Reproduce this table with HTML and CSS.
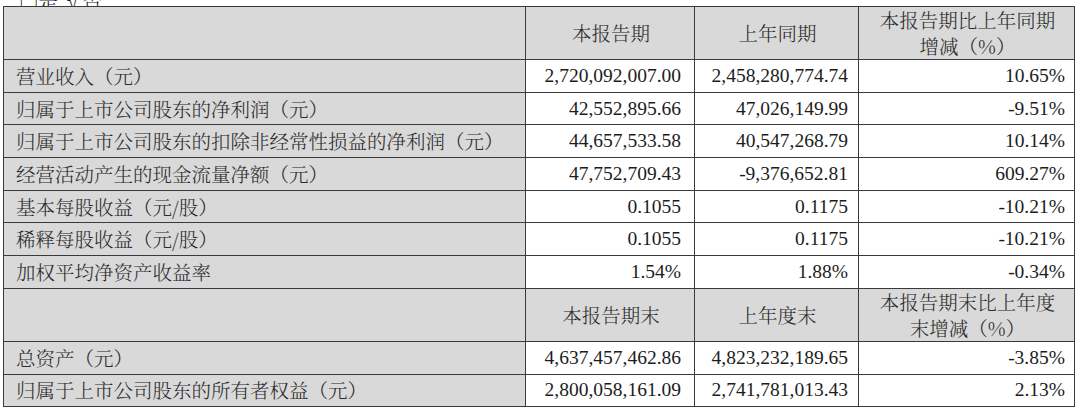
FILE: index.html
```html
<!DOCTYPE html>
<html lang="zh">
<head>
<meta charset="utf-8">
<link rel="stylesheet" href="styles.css">
</head>
<body>
<div class="cut"><span class="cut-text">□是 √否</span></div>
<table class="fin">
  <colgroup>
    <col class="c1"><col class="c2"><col class="c3"><col class="c4">
  </colgroup>
  <tr class="hd">
    <td class="lbl"></td>
    <td>本报告期</td>
    <td>上年同期</td>
    <td>本报告期比上年同期<br>增减（%）</td>
  </tr>
  <tr class="row"><td class="lbl">营业收入（元）</td><td class="num n2">2,720,092,007.00</td><td class="num">2,458,280,774.74</td><td class="num n4">10.65%</td></tr>
  <tr class="row"><td class="lbl">归属于上市公司股东的净利润（元）</td><td class="num n2">42,552,895.66</td><td class="num">47,026,149.99</td><td class="num n4">-9.51%</td></tr>
  <tr class="row"><td class="lbl">归属于上市公司股东的扣除非经常性损益的净利润（元）</td><td class="num n2">44,657,533.58</td><td class="num">40,547,268.79</td><td class="num n4">10.14%</td></tr>
  <tr class="row"><td class="lbl">经营活动产生的现金流量净额（元）</td><td class="num n2">47,752,709.43</td><td class="num">-9,376,652.81</td><td class="num n4">609.27%</td></tr>
  <tr class="row"><td class="lbl">基本每股收益（元/股）</td><td class="num n2">0.1055</td><td class="num">0.1175</td><td class="num n4">-10.21%</td></tr>
  <tr class="row"><td class="lbl">稀释每股收益（元/股）</td><td class="num n2">0.1055</td><td class="num">0.1175</td><td class="num n4">-10.21%</td></tr>
  <tr class="row"><td class="lbl">加权平均净资产收益率</td><td class="num n2">1.54%</td><td class="num">1.88%</td><td class="num n4">-0.34%</td></tr>
  <tr class="hd">
    <td class="lbl"></td>
    <td>本报告期末</td>
    <td>上年度末</td>
    <td>本报告期末比上年度<br>末增减（%）</td>
  </tr>
  <tr class="row"><td class="lbl">总资产（元）</td><td class="num n2">4,637,457,462.86</td><td class="num">4,823,232,189.65</td><td class="num n4">-3.85%</td></tr>
  <tr class="row"><td class="lbl">归属于上市公司股东的所有者权益（元）</td><td class="num n2">2,800,058,161.09</td><td class="num">2,741,781,013.43</td><td class="num n4">2.13%</td></tr>
</table>
</body>
</html>
```
FILE: styles.css
```css
html, body {
  margin: 0;
  padding: 0;
  background: #ffffff;
}
body {
  padding: 0 6px 0 3px;
  font-family: "Liberation Serif", "Noto Serif CJK SC", "Noto Sans CJK SC", serif;
  color: #1c1c1c;
}
.cut {
  height: 6px;
  overflow: hidden;
  display: flex;
  align-items: flex-end;
  padding-left: 16px;
}
.cut-text {
  font-size: 19.5px;
  line-height: 19.5px;
  margin-bottom: -4px;
  font-family: "Noto Serif CJK SC", "Noto Sans CJK SC", sans-serif;
  font-weight: 300;
}
.fin {
  border-collapse: collapse;
  table-layout: fixed;
  width: 1071px;
  font-size: 19.5px;
}
.c1 { width: 522px; }
.c2 { width: 169px; }
.c3 { width: 164px; }
.c4 { width: 216px; }
.fin td {
  border: 1px solid #3a3a3a;
  padding: 0 10px 0 12px;
  white-space: nowrap;
  overflow: hidden;
}
.hd {
  height: 52.5px;
  background: #d9d9d9;
}
.hd td {
  text-align: center;
  line-height: 26px;
  font-family: "Noto Serif CJK SC", "Noto Sans CJK SC", sans-serif;
  font-weight: 300;
  color: #2a2a2a;
}
.row {
  height: 32.7px;
}
.lbl {
  background: #d9d9d9;
  font-family: "Noto Serif CJK SC", "Noto Sans CJK SC", sans-serif;
  font-weight: 300;
  color: #2a2a2a;
  text-align: left;
  line-height: 24px;
}
.num {
  text-align: right;
  background: #ffffff;
  font-family: "Liberation Serif", serif;
  line-height: 24px;
}
.fin .n2 {
  padding-right: 13px;
}
.fin .n4 {
  padding-right: 9px;
}
```
